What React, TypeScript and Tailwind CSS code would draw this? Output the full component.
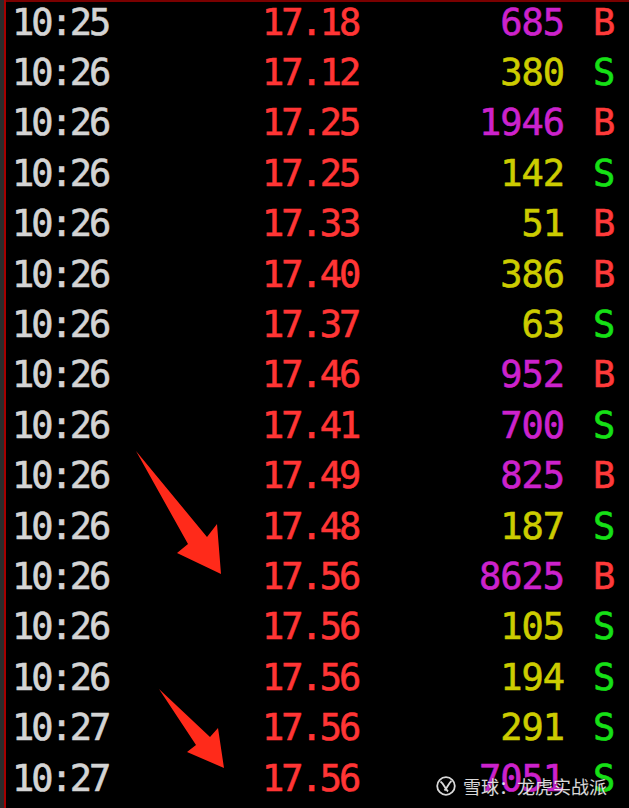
const rows: [string, string, string, "m" | "y", "B" | "S"][] = [
  ["10:25", "17.18", "685", "m", "B"],
  ["10:26", "17.12", "380", "y", "S"],
  ["10:26", "17.25", "1946", "m", "B"],
  ["10:26", "17.25", "142", "y", "S"],
  ["10:26", "17.33", "51", "y", "B"],
  ["10:26", "17.40", "386", "y", "B"],
  ["10:26", "17.37", "63", "y", "S"],
  ["10:26", "17.46", "952", "m", "B"],
  ["10:26", "17.41", "700", "m", "S"],
  ["10:26", "17.49", "825", "m", "B"],
  ["10:26", "17.48", "187", "y", "S"],
  ["10:26", "17.56", "8625", "m", "B"],
  ["10:26", "17.56", "105", "y", "S"],
  ["10:26", "17.56", "194", "y", "S"],
  ["10:27", "17.56", "291", "y", "S"],
  ["10:27", "17.56", "7051", "m", "S"],
];

const App = () => {
  return (
    <div className="relative w-[629px] h-[808px] overflow-hidden bg-black flex">
      <div className="w-[4px] bg-[#2b2b2b]" />
      <div className="w-[2px] bg-[#a40000]" />
      <div className="flex-1 flex flex-col border-t-2 border-[#7a0000]">
        <div className="-mt-[5px] pl-[6px] font-['DejaVu_Sans_Mono',monospace] font-normal text-[37px] [-webkit-text-stroke:0.6px_currentColor]">
          {rows.map(([t, p, v, c, f], i) => (
            <div key={i} className="flex items-center h-[50.4px] leading-none">
              <span className="w-[250px] text-[#d4d4d4] tracking-[-3px]">{t}</span>
              <span className="w-[95px] text-[#ff3535] tracking-[-3px]">{p}</span>
              <span
                className={
                  "w-[207px] text-right tracking-[-1px] " +
                  (c === "m" ? "text-[#cc22cc]" : "text-[#cccc00]")
                }
              >
                {v}
              </span>
              <span
                className={
                  "ml-[29px] " + (f === "B" ? "text-[#ff3a3a]" : "text-[#16e016]")
                }
              >
                {f}
              </span>
            </div>
          ))}
        </div>
      </div>

      <svg className="absolute inset-0 pointer-events-none" width="629" height="808">
        <polygon
          points="136,451 188,544 177,553 221,574 217,524 207,537"
          fill="#ff2a1a"
        />
        <polygon
          points="159,689 196,745 187,752 224,768 218,728 210,737"
          fill="#ff2a1a"
        />
      </svg>

      <div className="absolute left-[436px] top-[776px] flex items-center gap-[7px] text-white/85 font-['Noto_Sans_CJK_SC',sans-serif] text-[18px] leading-none [text-shadow:0_0_2px_rgba(0,0,0,0.6)]">
        <svg width="20" height="20" viewBox="0 0 20 20">
          <circle cx="10" cy="10" r="8.8" fill="none" stroke="rgba(255,255,255,0.85)" strokeWidth="1.8" />
          <path d="M4.5 5.5 C8 8 8.5 12 12 15.5 M15.5 5 C12 8 12 11 8.5 14.5" fill="none" stroke="rgba(255,255,255,0.85)" strokeWidth="1.8" />
        </svg>
        <span>雪球：龙虎实战派</span>
      </div>
    </div>
  );
};

export default App;
